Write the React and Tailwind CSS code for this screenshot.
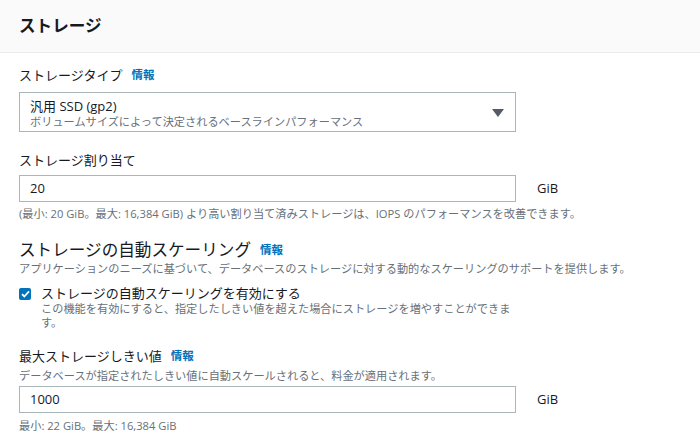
const font = { fontFamily: '"Open Sans", "Noto Sans CJK JP", sans-serif' }

const Info = () => (
  <span className="ml-[9px] text-[11.5px] font-bold text-[#0073bb]">情報</span>
)

const NumberField = ({ value }) => (
  <div className="flex items-start">
    <div className="flex h-[27px] w-[497px] items-center border border-[#aab7b8] bg-white px-[10px] text-[13px] text-[#16191f]">
      {value}
    </div>
    <span className="ml-[21px] mt-[4px] text-[13px] leading-[18px] text-[#16191f]">GiB</span>
  </div>
)

export default function App() {
  return (
    <div className="h-[442px] w-[700px] overflow-hidden bg-white text-[#16191f]" style={font}>
      <header className="flex h-[53px] items-center border-b border-[#eaeded] bg-[#fafafa] px-[19px]">
        <h1 className="text-[16.6px] font-bold leading-[22px]">ストレージ</h1>
      </header>

      <div className="px-[19px]">
        <div className="mt-[13px] flex items-center text-[13px] leading-[18px]">
          ストレージタイプ
          <Info />
        </div>

        <div className="mt-[8px] flex h-[40px] w-[497px] items-start justify-between border border-[#aab7b8] bg-white pl-[10px] pr-[11px] pt-[5px]">
          <div>
            <div className="text-[13px] leading-[16px]">汎用 SSD (gp2)</div>
            <div className="text-[11.2px] leading-[15px] text-[#687078]">
              ボリュームサイズによって決定されるベースラインパフォーマンス
            </div>
          </div>
          <svg className="mt-[11px]" width="12" height="8" viewBox="0 0 12 8">
            <path d="M0 0h12L6 8z" fill="#545b64" />
          </svg>
        </div>

        <div className="mt-[19px] text-[13px] leading-[18px]">ストレージ割り当て</div>
        <div className="mt-[6px]">
          <NumberField value="20" />
        </div>
        <div className="mt-[5px] text-[11.2px] leading-[14px] text-[#687078]">
          (最小: 20 GiB。最大: 16,384 GiB) より高い割り当て済みストレージは、IOPS のパフォーマンスを改善できます。
        </div>

        <div className="mt-[18px] flex items-center text-[16.6px] leading-[22px]">
          ストレージの自動スケーリング
          <Info />
        </div>
        <div className="text-[11.2px] leading-[15px] text-[#687078]">
          アプリケーションのニーズに基づいて、データベースのストレージに対する動的なスケーリングのサポートを提供します。
        </div>

        <div className="mt-[9px] flex items-start">
          <div className="mt-[3px] flex h-[12px] w-[12px] items-center justify-center rounded-[2px] bg-[#0073bb]">
            <svg width="9" height="8" viewBox="0 0 9 8">
              <path d="M1 4.2l2.3 2.3L8 1.3" fill="none" stroke="white" strokeWidth="1.8" />
            </svg>
          </div>
          <div className="ml-[10px] w-[480px]">
            <div className="text-[13px] leading-[17px]">ストレージの自動スケーリングを有効にする</div>
            <div className="text-[11.2px] leading-[14px] text-[#687078]">
              この機能を有効にすると、指定したしきい値を超えた場合にストレージを増やすことができます。
            </div>
          </div>
        </div>

        <div className="mt-[17px] flex items-center text-[13px] leading-[18px]">
          最大ストレージしきい値
          <Info />
        </div>
        <div className="mt-[3px] text-[11.2px] leading-[15px] text-[#687078]">
          データベースが指定されたしきい値に自動スケールされると、料金が適用されます。
        </div>
        <div className="mt-[3px]">
          <NumberField value="1000" />
        </div>
        <div className="mt-[6px] text-[11.2px] leading-[14px] text-[#687078]">
          最小: 22 GiB。最大: 16,384 GiB
        </div>
      </div>
    </div>
  )
}
